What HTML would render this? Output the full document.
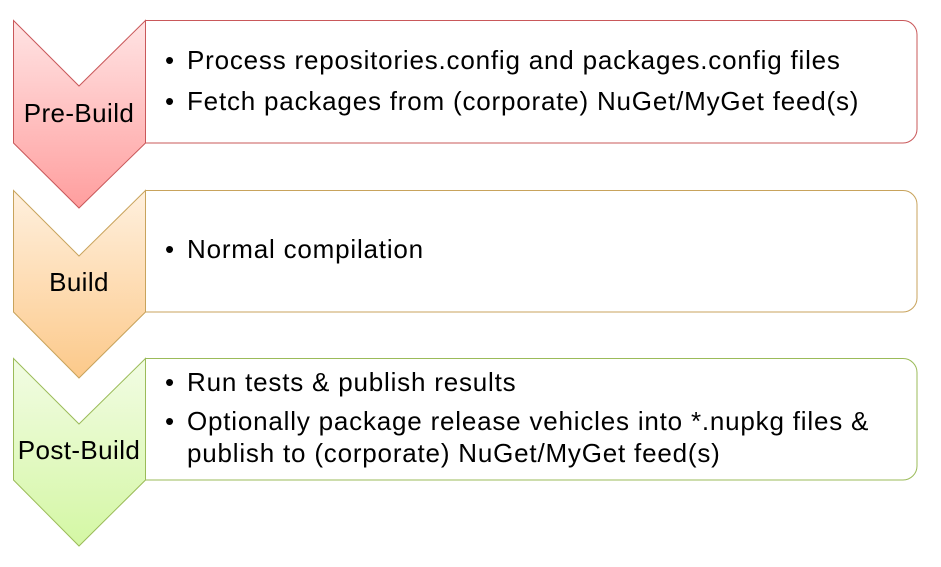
<!DOCTYPE html><html><head><style>
body{margin:0;width:941px;height:567px;background:#fff;font-family:"Liberation Sans",sans-serif;position:relative;overflow:hidden}
.t{position:absolute;font-size:26px;color:#000;white-space:nowrap;line-height:30px;letter-spacing:0.8px;left:187px}
.t b{position:absolute;left:-22px;font-weight:normal}
.l{position:absolute;font-size:26px;width:132px;text-align:center;left:13px;letter-spacing:0.4px;line-height:30px}
</style></head><body>
<svg width="941" height="567" style="position:absolute;left:0;top:0">
<defs>
<linearGradient id="r" x1="0" y1="0" x2="0" y2="1"><stop offset="0" stop-color="#ffe4e4"/><stop offset="1" stop-color="#ff9e9e"/></linearGradient>
<linearGradient id="o" x1="0" y1="0" x2="0" y2="1"><stop offset="0" stop-color="#fff0de"/><stop offset="1" stop-color="#fcc98a"/></linearGradient>
<linearGradient id="g" x1="0" y1="0" x2="0" y2="1"><stop offset="0" stop-color="#f2fce4"/><stop offset="1" stop-color="#d4f7a4"/></linearGradient>
</defs>
<path d="M145.5,20.5H903a14,14 0 0 1 14,14V129a14,14 0 0 1-14,14H145.5Z" fill="#fff" stroke="#c9585a"/>
<path d="M145.5,190.5H903a14,14 0 0 1 14,14V298a14,14 0 0 1-14,14H145.5Z" fill="#fff" stroke="#c8a35c"/>
<path d="M145.5,358.5H903a14,14 0 0 1 14,14V466a14,14 0 0 1-14,14H145.5Z" fill="#fff" stroke="#9bbb59"/>
<path d="M13.5,20.5L79,86L145.5,20.5V143L79,208L13.5,143Z" fill="url(#r)" stroke="#c9585a"/>
<path d="M13.5,190.5L79,256L145.5,190.5V312L79,378L13.5,312Z" fill="url(#o)" stroke="#c8a35c"/>
<path d="M13.5,358.5L79,424L145.5,358.5V480L79,546L13.5,480Z" fill="url(#g)" stroke="#9bbb59"/>
</svg>
<div class="l" style="top:98px">Pre-Build</div>
<div class="l" style="top:267px">Build</div>
<div class="l" style="top:435px">Post-Build</div>
<div class="t" style="top:45px"><b>•</b>Process repositories.config and packages.config files</div>
<div class="t" style="top:86px"><b>•</b>Fetch packages from (corporate) NuGet/MyGet feed(s)</div>
<div class="t" style="top:234px"><b>•</b>Normal compilation</div>
<div class="t" style="top:367px"><b>•</b>Run tests &amp; publish results</div>
<div class="t" style="top:406px"><b>•</b>Optionally package release vehicles into *.nupkg files &amp;</div>
<div class="t" style="top:438px">publish to (corporate) NuGet/MyGet feed(s)</div>
</body></html>
